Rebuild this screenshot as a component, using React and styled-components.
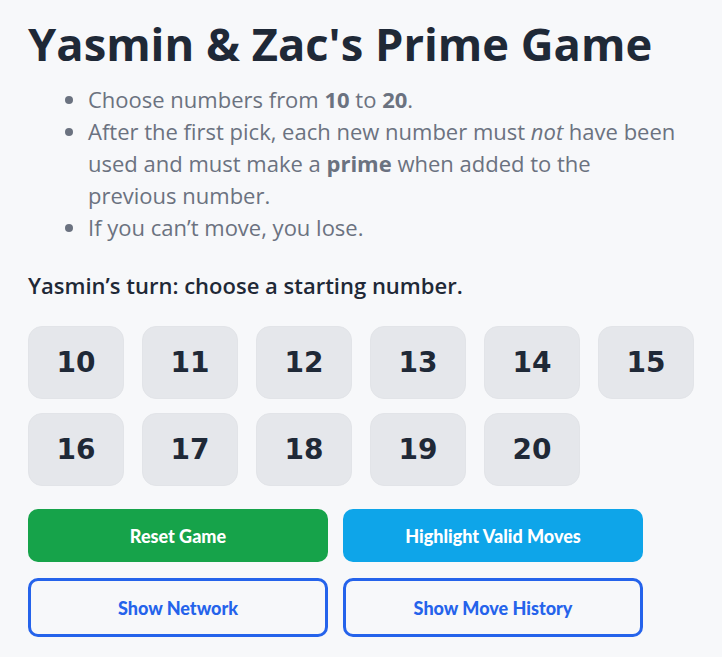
import styled, { createGlobalStyle } from "styled-components";
import { useState } from "react";

const GlobalStyle = createGlobalStyle`
  body {
    margin: 0;
    background: #f7f8fa;
    font-family: "Open Sans", "Noto Sans", sans-serif;
    color: #1f2937;
  }
`;

const Page = styled.div`
  padding: 14px 28px 20px;
`;

const Title = styled.h1`
  margin: 0;
  font-size: 45.3px;
  line-height: 60px;
  font-weight: 700;
  color: #1f2937;
`;

const Rules = styled.ul`
  margin: 9px 0 0;
  padding: 0 12px 0 60px;
  color: #6b7280;
  font-size: 22px;
  line-height: 32px;
`;

const Status = styled.p`
  margin: 27px 0 0;
  font-size: 22px;
  line-height: 30px;
  font-weight: 600;
  color: #1f2937;
`;

const Grid = styled.div`
  display: grid;
  grid-template-columns: repeat(6, 96px);
  column-gap: 18px;
  row-gap: 14px;
  margin-top: 26px;
`;

const Tile = styled.button`
  height: 73px;
  border: 1px solid #e2e4e8;
  border-radius: 14px;
  background: #e5e7eb;
  color: #1f2937;
  font-family: "DejaVu Sans", sans-serif;
  font-weight: 700;
  font-size: 28px;
  cursor: pointer;
`;

const Actions = styled.div`
  display: grid;
  grid-template-columns: repeat(2, 300px);
  column-gap: 15px;
  row-gap: 16px;
  margin-top: 23px;
`;

const ActionButton = styled.button`
  height: ${(p) => (p.$outline ? "59px" : "53px")};
  border-radius: 10px;
  border: ${(p) => (p.$outline ? "3px solid #2563eb" : "none")};
  background: ${(p) => (p.$outline ? "transparent" : p.$bg)};
  color: ${(p) => (p.$outline ? "#2563eb" : "#ffffff")};
  font-family: Lato, "Open Sans", sans-serif;
  font-weight: 900;
  font-size: 18px;
  cursor: pointer;
`;

export default function App() {
  const [used] = useState([]);
  const numbers = Array.from({ length: 11 }, (_, i) => i + 10);

  return (
    <Page>
      <GlobalStyle />
      <Title>Yasmin &amp; Zac's Prime Game</Title>
      <Rules>
        <li>
          Choose numbers from <b>10</b> to <b>20</b>.
        </li>
        <li>
          After the first pick, each new number must <i>not</i> have been used
          and must make a <b>prime</b> when added to the previous number.
        </li>
        <li>If you can’t move, you lose.</li>
      </Rules>
      <Status>Yasmin’s turn: choose a starting number.</Status>
      <Grid>
        {numbers.map((n) => (
          <Tile key={n} disabled={used.includes(n)}>
            {n}
          </Tile>
        ))}
      </Grid>
      <Actions>
        <ActionButton $bg="#16a34a">Reset Game</ActionButton>
        <ActionButton $bg="#0ea5e9">Highlight Valid Moves</ActionButton>
        <ActionButton $outline>Show Network</ActionButton>
        <ActionButton $outline>Show Move History</ActionButton>
      </Actions>
    </Page>
  );
}
